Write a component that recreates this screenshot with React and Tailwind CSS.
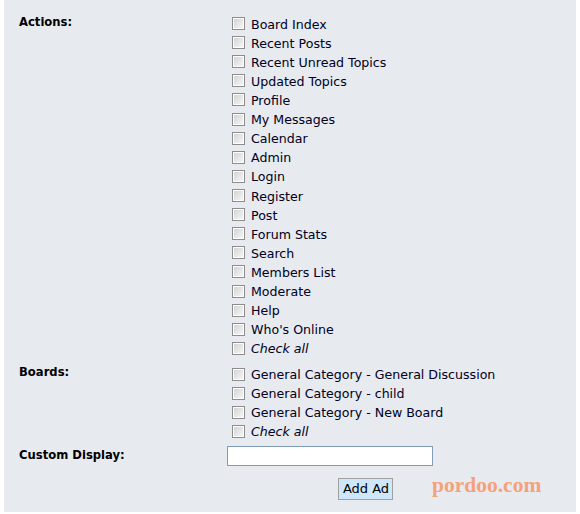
import React from "react";

const actions = [
  "Board Index",
  "Recent Posts",
  "Recent Unread Topics",
  "Updated Topics",
  "Profile",
  "My Messages",
  "Calendar",
  "Admin",
  "Login",
  "Register",
  "Post",
  "Forum Stats",
  "Search",
  "Members List",
  "Moderate",
  "Help",
  "Who's Online",
];

const boards = [
  "General Category - General Discussion",
  "General Category - child",
  "General Category - New Board",
];

function Box() {
  return (
    <span className="ml-[5px] mr-[6px] mt-[-3px] flex h-[13px] w-[13px] shrink-0 items-center justify-center border border-[#8d8d8d] bg-white">
      <span className="h-[9px] w-[9px] bg-gradient-to-br from-[#d4d4d4] to-[#f6f6f6]" />
    </span>
  );
}

function Row({ label, italic }) {
  return (
    <div className="flex h-[19.12px] items-center">
      <Box />
      <span className={italic ? "italic" : ""}>{label}</span>
    </div>
  );
}

function Label({ children, className = "" }) {
  return (
    <div className={"w-[223px] shrink-0 pl-[15px] text-[11.6px] font-bold leading-[14px] text-black " + className}>
      {children}
    </div>
  );
}

export default function App() {
  return (
    <div className="h-[514px] w-[580px] bg-white px-[4px] pb-[2px]" style={{ fontFamily: '"DejaVu Sans", Verdana, sans-serif' }}>
      <div className="relative h-full w-full bg-[#e7eaef] pt-[15.5px] text-[12.6px] text-[#000022]">
        <div className="flex">
          <Label className="mt-[-1px]">Actions:</Label>
          <div className="flex flex-col">
            {actions.map((a) => (
              <Row key={a} label={a} />
            ))}
            <Row label="Check all" italic />
          </div>
        </div>
        <div className="mt-[6.5px] flex">
          <Label className="mt-[-1px]">Boards:</Label>
          <div className="flex flex-col">
            {boards.map((a) => (
              <Row key={a} label={a} />
            ))}
            <Row label="Check all" italic />
          </div>
        </div>
        <div className="mt-[4px] flex items-center">
          <Label className="mt-[-3px]">Custom Display:</Label>
          <div className="h-[20px] w-[206px] border border-[#7f9db9] bg-white" />
        </div>
        <div className="mt-[12px] flex">
          <button className="ml-[334px] h-[22px] w-[55px] border border-[#a0a0a0] bg-[#cfe7fb] pl-[1px] text-[13px] leading-[20px] text-black">
            Add Ad
          </button>
        </div>
        <div
          className="absolute left-[428px] top-[472px] text-[21.5px] font-bold leading-[26px] text-[#f5a27a]"
          style={{ fontFamily: '"Liberation Serif", "Times New Roman", serif' }}
        >
          pordoo.com
        </div>
      </div>
    </div>
  );
}
